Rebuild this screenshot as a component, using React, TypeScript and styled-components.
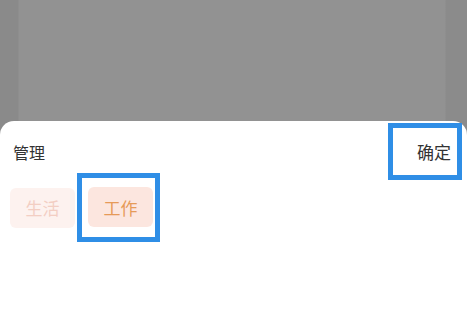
import React from 'react';
import styled, { createGlobalStyle, css } from 'styled-components';

const GlobalStyle = createGlobalStyle`
  html, body, #root {
    margin: 0;
    padding: 0;
    height: 100%;
  }
  body {
    font-family: "Noto Sans CJK SC", "Noto Sans", sans-serif;
  }
`;

const Screen = styled.div`
  height: 100vh;
  display: flex;
  flex-direction: column;
  background: linear-gradient(
    to right,
    #8a8a8a 0,
    #8a8a8a 18px,
    #929292 19px,
    #929292 calc(100% - 22px),
    #8b8b8b calc(100% - 21px)
  );
  overflow: hidden;
`;

const Backdrop = styled.div`
  flex: 1;
`;

const Sheet = styled.div`
  height: 202px;
  background: #ffffff;
  border-radius: 14px 14px 0 0;
  display: flex;
  flex-direction: column;
`;

const Header = styled.div`
  margin-top: 7px;
  height: 47px;
  padding: 0 10px 0 13px;
  display: flex;
  align-items: center;
  justify-content: space-between;
`;

const Title = styled.span`
  font-size: 16px;
  color: #333333;
`;

const highlight = css`
  outline: 5px solid #2f8ee6;
`;

const ConfirmButton = styled.button`
  ${highlight};
  width: 64px;
  height: 47px;
  border: 0;
  background: transparent;
  padding: 0 6px 0 0;
  display: flex;
  align-items: center;
  justify-content: flex-end;
  font-family: inherit;
  font-size: 17px;
  color: #333333;
`;

const TagRow = styled.div`
  margin-top: 3px;
  padding-left: 10px;
  display: flex;
  align-items: center;
  gap: 7px;
`;

const TagFrame = styled.div<{ $marked?: boolean }>`
  ${({ $marked }) => $marked && highlight};
  ${({ $marked }) => $marked && 'padding: 9px 2px 10px 6px;'}
`;

const Tag = styled.div<{ $active?: boolean }>`
  width: 65px;
  height: 40px;
  border-radius: 6px;
  display: flex;
  align-items: center;
  justify-content: center;
  font-size: 17px;
  background: ${({ $active }) => ($active ? '#fce6df' : '#fdf2ef')};
  color: ${({ $active }) => ($active ? '#e69a58' : '#f3cec3')};
`;

const tags = [
  { label: '生活', active: false },
  { label: '工作', active: true },
];

export default function App() {
  return (
    <>
      <GlobalStyle />
      <Screen>
        <Backdrop />
        <Sheet>
          <Header>
            <Title>管理</Title>
            <ConfirmButton>确定</ConfirmButton>
          </Header>
          <TagRow>
            {tags.map((t) => (
              <TagFrame key={t.label} $marked={t.active}>
                <Tag $active={t.active}>{t.label}</Tag>
              </TagFrame>
            ))}
          </TagRow>
        </Sheet>
      </Screen>
    </>
  );
}
